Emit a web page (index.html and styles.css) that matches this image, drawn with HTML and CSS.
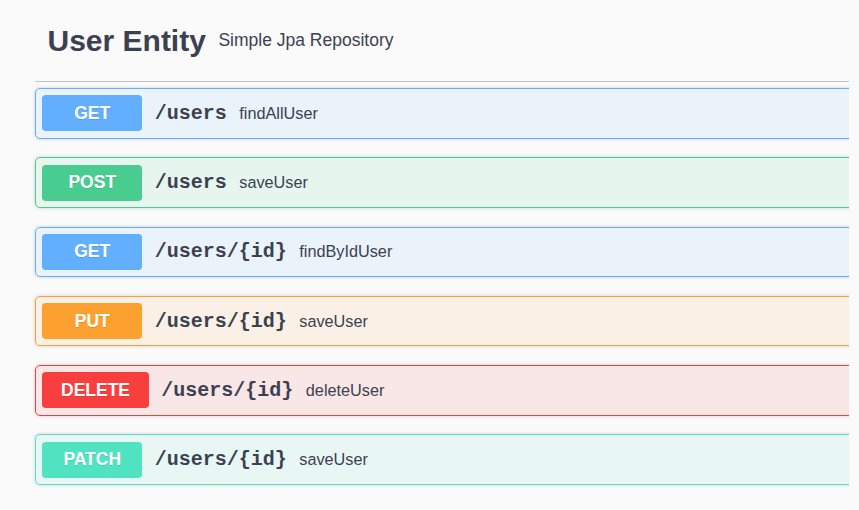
FILE: index.html
```html
<!DOCTYPE html>
<html lang="en">
<head>
<meta charset="utf-8">
<title>User Entity</title>
<link rel="stylesheet" href="styles.css">
</head>
<body>
<div class="wrapper">
  <section class="tag-section">
    <h4 class="tag">
      <span class="tag-name">User Entity</span>
      <small class="tag-desc">Simple Jpa Repository</small>
    </h4>
    <div class="opblock opblock-get">
      <div class="summary">
        <span class="method">GET</span>
        <span class="path">/users</span>
        <span class="desc">findAllUser</span>
      </div>
    </div>
    <div class="opblock opblock-post">
      <div class="summary">
        <span class="method">POST</span>
        <span class="path">/users</span>
        <span class="desc">saveUser</span>
      </div>
    </div>
    <div class="opblock opblock-get">
      <div class="summary">
        <span class="method">GET</span>
        <span class="path">/users/{id}</span>
        <span class="desc">findByIdUser</span>
      </div>
    </div>
    <div class="opblock opblock-put">
      <div class="summary">
        <span class="method">PUT</span>
        <span class="path">/users/{id}</span>
        <span class="desc">saveUser</span>
      </div>
    </div>
    <div class="opblock opblock-delete">
      <div class="summary">
        <span class="method">DELETE</span>
        <span class="path">/users/{id}</span>
        <span class="desc">deleteUser</span>
      </div>
    </div>
    <div class="opblock opblock-patch">
      <div class="summary">
        <span class="method">PATCH</span>
        <span class="path">/users/{id}</span>
        <span class="desc">saveUser</span>
      </div>
    </div>
  </section>
</div>
</body>
</html>
```

FILE: styles.css
```css
* {
  box-sizing: border-box;
}

html,
body {
  overflow: hidden;
}

body {
  margin: 10px;
  background: #fafafa;
  font-family: "Liberation Sans", Arial, sans-serif;
  color: #3b4151;
}

.wrapper {
  width: 1000px;
  padding: 0 25px;
}

.tag {
  display: flex;
  align-items: center;
  margin: 0 0 6.25px;
  padding: 12.6px 25px 22.4px 12.5px;
  border-bottom: 1px solid rgba(59, 65, 81, 0.3);
  font-weight: 700;
}

.tag-name {
  font-size: 30px;
  line-height: 36px;
}

.tag-desc {
  margin-left: 12.5px;
  font-size: 17.5px;
  font-weight: 400;
}

.opblock {
  margin: 0 0 18.75px;
  border: 1px solid #000;
  border-radius: 5px;
  box-shadow: 0 0 3.75px rgba(0, 0, 0, 0.19);
}

.summary {
  display: flex;
  align-items: center;
  padding: 6.25px;
}

.method {
  min-width: 100px;
  padding: 7.5px 18.75px;
  border-radius: 3.75px;
  font-size: 17.5px;
  line-height: 21px;
  font-weight: 700;
  text-align: center;
  color: #fff;
  text-shadow: 0 1px 0 rgba(0, 0, 0, 0.1);
}

.path {
  padding: 0 12.5px;
  font-family: "Liberation Mono", "Courier New", monospace;
  font-size: 20px;
  font-weight: 700;
  color: #3b4151;
}

.desc {
  font-size: 16.25px;
  color: #3b4151;
}

.opblock-get {
  border-color: #61affe;
  background: rgba(97, 175, 254, 0.1);
}
.opblock-get .method {
  background: #61affe;
}

.opblock-post {
  border-color: #49cc90;
  background: rgba(73, 204, 144, 0.1);
}
.opblock-post .method {
  background: #49cc90;
}

.opblock-put {
  border-color: #fca130;
  background: rgba(252, 161, 48, 0.1);
}
.opblock-put .method {
  background: #fca130;
}

.opblock-delete {
  border-color: #f93e3e;
  background: rgba(249, 62, 62, 0.1);
}
.opblock-delete .method {
  background: #f93e3e;
}

.opblock-patch {
  border-color: #50e3c2;
  background: rgba(80, 227, 194, 0.1);
}
.opblock-patch .method {
  background: #50e3c2;
}
```
